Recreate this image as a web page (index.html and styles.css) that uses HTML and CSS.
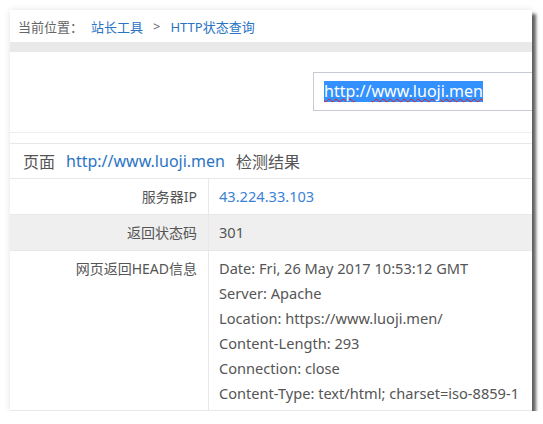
FILE: index.html
```html
<!DOCTYPE html>
<html lang="zh-CN">
<head>
<meta charset="utf-8">
<title>HTTP状态查询</title>
<link rel="stylesheet" href="styles.css">
</head>
<body>
<div class="window">
  <div class="crumb">
    <span class="muted">当前位置：</span>
    <a class="link">站长工具</a>
    <span class="muted sep">&gt;</span>
    <a class="link">HTTP状态查询</a>
  </div>
  <div class="bar"></div>
  <div class="form">
    <div class="input"><span class="sel"><span class="sp">http</span>://<span class="sp">www.luoji.men</span></span></div>
  </div>
  <div class="result">
    <div class="title"><span>页面</span><span class="tlink">http://www.luoji.men</span><span>检测结果</span></div>
    <div class="row">
      <div class="label">服务器IP</div>
      <div class="value ip">43.224.33.103</div>
    </div>
    <div class="row alt">
      <div class="label">返回状态码</div>
      <div class="value">301</div>
    </div>
    <div class="row last">
      <div class="label">网页返回HEAD信息</div>
      <div class="value lines">
        <div>Date: Fri, 26 May 2017 10:53:12 GMT</div>
        <div>Server: Apache</div>
        <div>Location: https://www.luoji.men/</div>
        <div>Content-Length: 293</div>
        <div>Connection: close</div>
        <div>Content-Type: text/html; charset=iso-8859-1</div>
      </div>
    </div>
  </div>
</div>
</body>
</html>
```
FILE: styles.css
```css
html, body {
  margin: 0;
  padding: 0;
  background: #ffffff;
}
body {
  padding: 10px 0 0 10px;
  font-family: "Noto Sans", "Noto Sans CJK SC", sans-serif;
  color: #555;
}
.window {
  width: 522px;
  height: 401px;
  background: #fff;
  overflow: hidden;
  box-shadow: 0 0 6px rgba(0,0,0,0.12), 4px 4px 3px rgba(0,0,0,0.6);
}
.crumb {
  height: 32px;
  display: flex;
  align-items: center;
  padding-left: 8px;
  font-size: 13px;
  white-space: nowrap;
}
.muted { color: #666; }
.link { color: #2a74c4; margin-left: 8px; }
.sep { margin-left: 10px; margin-right: 2px; }
.bar {
  height: 10px;
  background: #e9e9e9;
}
.form {
  height: 81px;
  border-bottom: 1px solid #eee;
  padding-top: 20px;
  padding-left: 303px;
  box-sizing: border-box;
}
.input {
  width: 260px;
  height: 39px;
  box-sizing: border-box;
  border: 1px solid #c6cad6;
  padding-left: 10px;
  display: flex;
  align-items: center;
  font-size: 16px;
  white-space: nowrap;
}
.sel {
  background: #3390ff;
  color: #fff;
  line-height: 21px;
}
.sp {
  text-decoration: underline wavy #e02020;
  text-decoration-thickness: 1px;
  text-underline-offset: 1px;
}
.result {
  margin-top: 10px;
  border-top: 1px solid #e8e8e8;
}
.title {
  height: 34px;
  display: flex;
  align-items: center;
  gap: 11px;
  padding-left: 13px;
  font-size: 16px;
  color: #555;
  border-bottom: 1px solid #e8e8e8;
  white-space: nowrap;
}
.tlink { color: #2a74c4; }
.row {
  display: flex;
  border-bottom: 1px solid #e8e8e8;
  font-size: 14px;
}
.row.alt { background: #efefef; }
.label {
  width: 199px;
  flex: none;
  text-align: right;
  padding-right: 11px;
  box-sizing: border-box;
  line-height: 35px;
  border-right: 1px solid #e8e8e8;
}
.row.last .label { line-height: 20px; padding-top: 8px; }
.value {
  padding-left: 10px;
  line-height: 35px;
  font-size: 14.6px;
}
.ip { color: #3a82d8; }
.lines {
  line-height: 25px;
  padding-top: 5px;
  padding-bottom: 4px;
}
```
